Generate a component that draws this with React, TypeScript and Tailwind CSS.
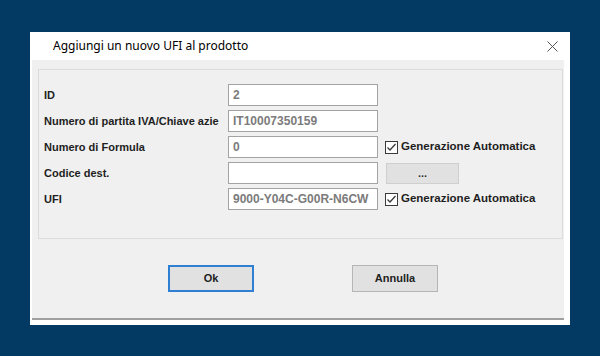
import React from "react";

const Check = () => (
  <svg width="13" height="13" viewBox="0 0 13 13" className="shrink-0">
    <rect x="0.5" y="0.5" width="12" height="12" fill="#ffffff" stroke="#3a3a3a" />
    <polyline points="2.5,6.5 5,9 10.5,3" fill="none" stroke="#3a3a3a" strokeWidth="1.3" />
  </svg>
);

const Field = ({ value }: { value: string }) => (
  <div className="w-[150px] h-[22px] shrink-0 bg-white border border-[#a3a3a3] flex items-center pl-[4px] text-[12px] font-bold text-[#7b7b7b] overflow-hidden whitespace-nowrap">
    {value}
  </div>
);

const Label = ({ text }: { text: string }) => (
  <div className="w-[184px] shrink-0 overflow-hidden whitespace-nowrap text-[11px] font-bold text-[#1e1e1e]">
    {text}
  </div>
);

const AutoGen = () => (
  <div className="flex items-center ml-[7px] gap-[3px]">
    <Check />
    <span className="text-[11.5px] font-bold text-[#1e1e1e] whitespace-nowrap">Generazione Automatica</span>
  </div>
);

export default function App() {
  return (
    <div
      className="w-[600px] h-[356px] bg-[#033a63] pt-[32px] pl-[30px]"
      style={{ fontFamily: '"Liberation Sans", Arial, sans-serif' }}
    >
      <div className="w-[540px] h-[293px] bg-white flex flex-col">
        <div className="h-[28px] flex items-center justify-between pl-[23px] pr-[12px] shrink-0">
          <span className="text-[12px] text-black" style={{ fontFamily: '"Noto Sans", "Open Sans", sans-serif' }}>
            Aggiungi un nuovo UFI al prodotto
          </span>
          <svg width="11" height="11" viewBox="0 0 11 11">
            <line x1="0.5" y1="0.5" x2="10.5" y2="10.5" stroke="#555555" strokeWidth="1" />
            <line x1="10.5" y1="0.5" x2="0.5" y2="10.5" stroke="#555555" strokeWidth="1" />
          </svg>
        </div>
        <div className="ml-[2px] mr-[6px] h-[258px] bg-[#f0f0f0] flex flex-col shrink-0">
          <div className="ml-[6px] mr-[1px] mt-[9px] h-[170px] border border-[#dcdcdc] pt-[14px] pl-[5px] flex flex-col gap-[4px]">
            <div className="flex items-center h-[22px]">
              <Label text="ID" />
              <Field value="2" />
            </div>
            <div className="flex items-center h-[22px]">
              <Label text="Numero di partita IVA/Chiave azie" />
              <Field value="IT10007350159" />
            </div>
            <div className="flex items-center h-[22px]">
              <Label text="Numero di Formula" />
              <Field value="0" />
              <AutoGen />
            </div>
            <div className="flex items-center h-[22px]">
              <Label text="Codice dest." />
              <Field value="" />
              <div className="ml-[8px] mt-[1px] w-[73px] h-[21px] bg-[#e1e1e1] border border-[#cfcfcf] flex items-center justify-center text-[11px] font-bold text-[#333333] leading-none">
                ...
              </div>
            </div>
            <div className="flex items-center h-[22px]">
              <Label text="UFI" />
              <Field value="9000-Y04C-G00R-N6CW" />
              <AutoGen />
            </div>
          </div>
          <div className="flex mt-[26px] pl-[136px] gap-[98px]">
            <div className="w-[86px] h-[27px] bg-[#e1e1e1] border-2 border-[#2f7fd3] flex items-center justify-center text-[11px] font-bold text-[#222222]">
              Ok
            </div>
            <div className="w-[86px] h-[27px] bg-[#e1e1e1] border border-[#b5b5b5] flex items-center justify-center text-[11px] font-bold text-[#222222]">
              Annulla
            </div>
          </div>
        </div>
        <div className="ml-[2px] mr-[6px] h-[2px] bg-[#a0a0a0] shrink-0" />
      </div>
    </div>
  );
}
